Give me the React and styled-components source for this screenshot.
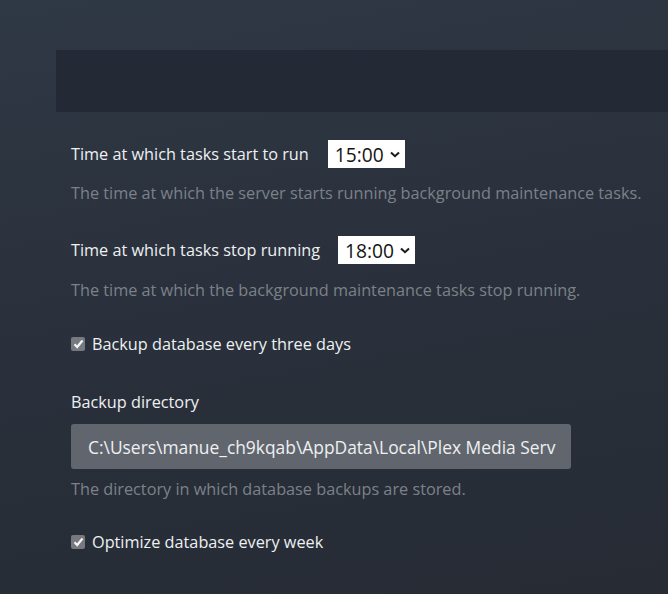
import React from "react";
import styled, { createGlobalStyle } from "styled-components";

const GlobalStyle = createGlobalStyle`
  html, body {
    margin: 0;
    padding: 0;
    height: 100%;
  }
  body {
    font-family: "Open Sans", "Liberation Sans", sans-serif;
    background: linear-gradient(170deg, #2f3845 0%, #2a313c 45%, #262b34 100%);
    min-height: 594px;
    overflow: hidden;
  }
`;

const Page = styled.div`
  padding: 50px 0 0 56px;
  width: 668px;
  height: 594px;
  box-sizing: border-box;
`;

const Banner = styled.div`
  height: 62px;
  background: #232a35;
`;

const Form = styled.div`
  padding: 28px 0 0 15px;
  display: flex;
  flex-direction: column;
`;

const Group = styled.div`
  margin-bottom: ${(p) => p.$gap || 20}px;
`;

const Row = styled.div`
  display: flex;
  align-items: center;
  gap: ${(p) => p.$gap || 18}px;
`;

const Label = styled.label`
  font-size: 16.25px;
  color: #eef0f2;
  line-height: 22px;
  display: flex;
  align-items: center;
`;

const Help = styled.div`
  font-size: 16.25px;
  color: #7c8189;
  line-height: 22px;
  margin-top: ${(p) => p.$top || 14}px;
`;

const Select = styled.div`
  background: #ffffff;
  color: #141414;
  font-size: 19.2px;
  height: 28px;
  display: flex;
  align-items: center;
  padding: 0 5px 0 7px;
  gap: 6px;
  box-sizing: border-box;
`;

const Check = styled.span`
  width: 14px;
  height: 14px;
  border-radius: 2px;
  background: #76797f;
  display: inline-flex;
  align-items: center;
  justify-content: center;
  margin-right: 7px;
`;

const Input = styled.div`
  margin-top: 11px;
  width: 500px;
  height: 45px;
  box-sizing: border-box;
  background: #61666e;
  border-radius: 3px;
  color: #eef0f2;
  font-size: 17.4px;
  display: flex;
  align-items: center;
  padding: 0 15px 0 17px;
  white-space: nowrap;
  overflow: hidden;
`;

const Chevron = () => (
  <svg width="10" height="7" viewBox="0 0 10 7">
    <path d="M1 1.5 L5 5.2 L9 1.5" fill="none" stroke="#1a1a1a" strokeWidth="2" />
  </svg>
);

const Tick = () => (
  <svg width="11" height="10" viewBox="0 0 11 10">
    <path d="M1.5 5.2 L4.2 8 L9.5 1.5" fill="none" stroke="#f4f4f4" strokeWidth="2.2" />
  </svg>
);

export default function App() {
  return (
    <>
      <GlobalStyle />
      <Page>
        <Banner />
        <Form>
          <Group $gap={32}>
            <Row $gap={19}>
              <Label>Time at which tasks start to run</Label>
              <Select>
                15:00 <Chevron />
              </Select>
            </Row>
            <Help>The time at which the server starts running background maintenance tasks.</Help>
          </Group>
          <Group $gap={32}>
            <Row>
              <Label>Time at which tasks stop running</Label>
              <Select>
                18:00 <Chevron />
              </Select>
            </Row>
            <Help $top={15}>The time at which the background maintenance tasks stop running.</Help>
          </Group>
          <Group $gap={36}>
            <Label>
              <Check>
                <Tick />
              </Check>
              Backup database every three days
            </Label>
          </Group>
          <Group $gap={31}>
            <Label>Backup directory</Label>
            <Input>C:\Users\manue_ch9kqab\AppData\Local\Plex Media Serv</Input>
            <Help $top={9}>The directory in which database backups are stored.</Help>
          </Group>
          <Group>
            <Label>
              <Check>
                <Tick />
              </Check>
              Optimize database every week
            </Label>
          </Group>
        </Form>
      </Page>
    </>
  );
}
